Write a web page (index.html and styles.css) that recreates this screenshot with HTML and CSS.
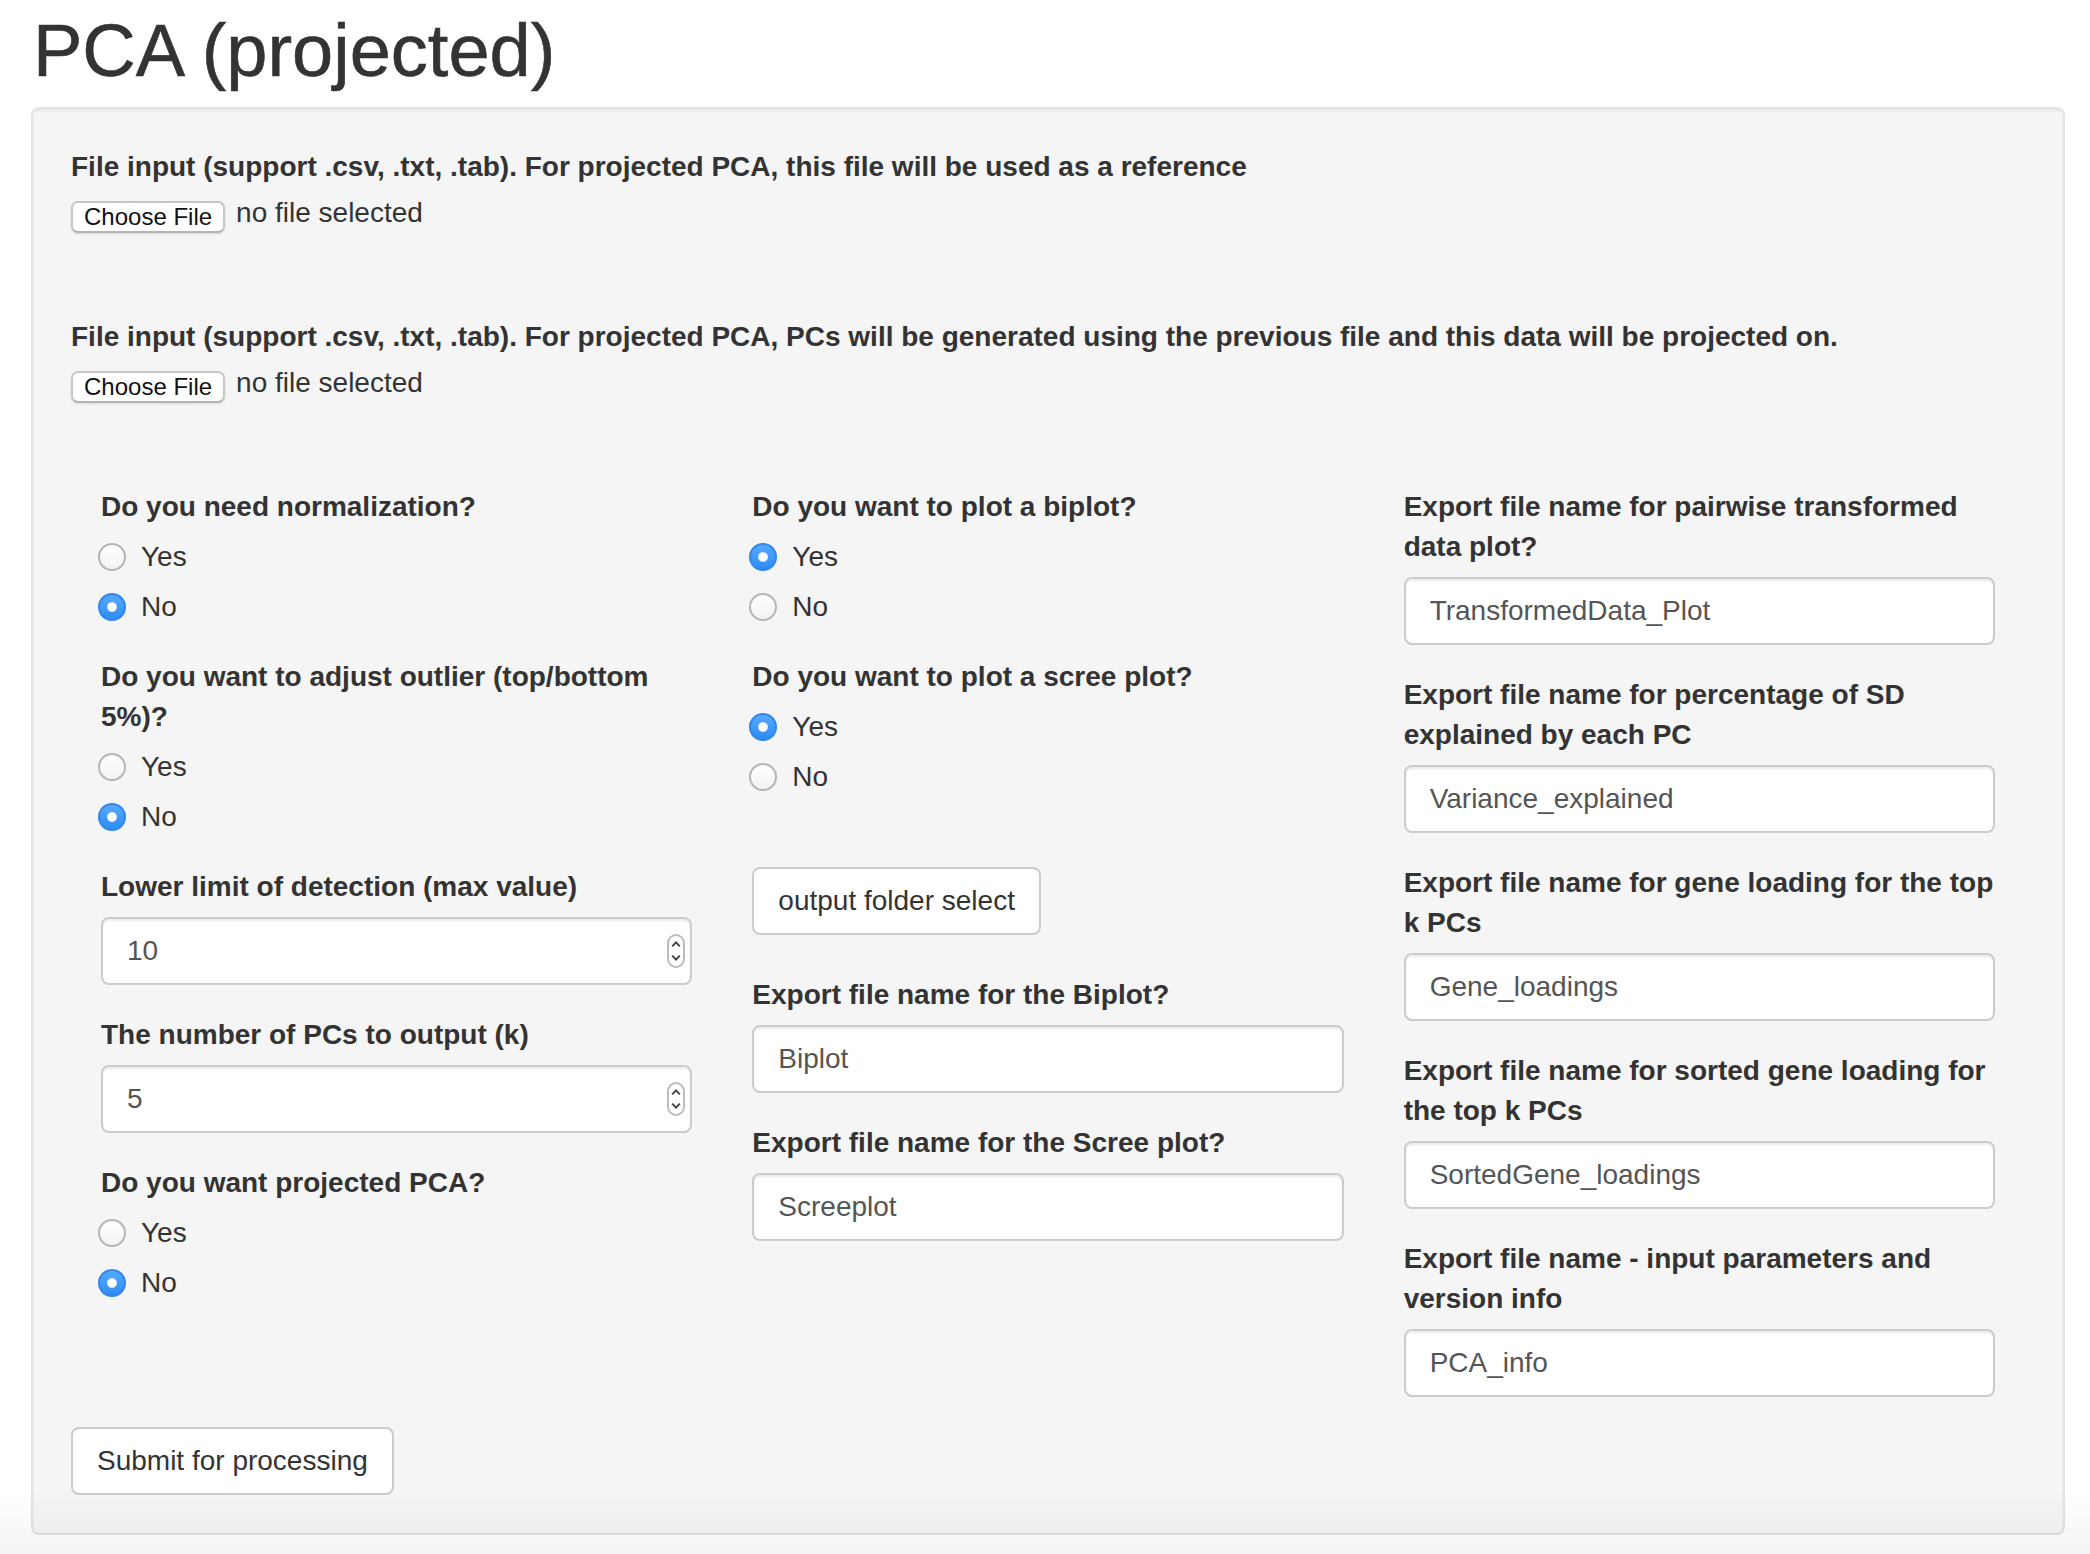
FILE: index.html
```html
<!DOCTYPE html>
<html lang="en">
<head>
<meta charset="utf-8">
<title>PCA (projected)</title>
<link rel="stylesheet" href="styles.css">
</head>
<body>
<div class="page">
  <h1 class="title">PCA (projected)</h1>
  <div class="well">
    <div class="file-group">
      <label class="control-label">File input (support .csv, .txt, .tab). For projected PCA, this file will be used as a reference</label>
      <div class="file-row"><span class="file-btn">Choose File</span><span class="file-name">no file selected</span></div>
    </div>
    <div class="file-group">
      <label class="control-label">File input (support .csv, .txt, .tab). For projected PCA, PCs will be generated using the previous file and this data will be projected on.</label>
      <div class="file-row"><span class="file-btn">Choose File</span><span class="file-name">no file selected</span></div>
    </div>

    <div class="cols">
      <div class="col">
        <div class="form-group">
          <label class="control-label">Do you need normalization?</label>
          <div class="radio"><span class="radio-dot"></span>Yes</div>
          <div class="radio"><span class="radio-dot checked"></span>No</div>
        </div>
        <div class="form-group">
          <label class="control-label">Do you want to adjust outlier (top/bottom 5%)?</label>
          <div class="radio"><span class="radio-dot"></span>Yes</div>
          <div class="radio"><span class="radio-dot checked"></span>No</div>
        </div>
        <div class="form-group">
          <label class="control-label">Lower limit of detection (max value)</label>
          <div class="form-control number"><span>10</span><svg class="spinner" viewBox="0 0 9 17" width="9" height="17"><rect x="0.5" y="0.5" width="8" height="16" rx="4" ry="4" fill="#fff" stroke="#bcbcbc"/><path d="M2.6 6.2 L4.5 4.2 L6.4 6.2" fill="none" stroke="#444" stroke-width="1"/><path d="M2.6 10.8 L4.5 12.8 L6.4 10.8" fill="none" stroke="#444" stroke-width="1"/></svg></div>
        </div>
        <div class="form-group">
          <label class="control-label">The number of PCs to output (k)</label>
          <div class="form-control number"><span>5</span><svg class="spinner" viewBox="0 0 9 17" width="9" height="17"><rect x="0.5" y="0.5" width="8" height="16" rx="4" ry="4" fill="#fff" stroke="#bcbcbc"/><path d="M2.6 6.2 L4.5 4.2 L6.4 6.2" fill="none" stroke="#444" stroke-width="1"/><path d="M2.6 10.8 L4.5 12.8 L6.4 10.8" fill="none" stroke="#444" stroke-width="1"/></svg></div>
        </div>
        <div class="form-group">
          <label class="control-label">Do you want projected PCA?</label>
          <div class="radio"><span class="radio-dot"></span>Yes</div>
          <div class="radio"><span class="radio-dot checked"></span>No</div>
        </div>
      </div>

      <div class="col">
        <div class="form-group">
          <label class="control-label">Do you want to plot a biplot?</label>
          <div class="radio"><span class="radio-dot checked"></span>Yes</div>
          <div class="radio"><span class="radio-dot"></span>No</div>
        </div>
        <div class="form-group">
          <label class="control-label">Do you want to plot a scree plot?</label>
          <div class="radio"><span class="radio-dot checked"></span>Yes</div>
          <div class="radio"><span class="radio-dot"></span>No</div>
        </div>
        <div class="btn-wrap"><span class="btn">output folder select</span></div>
        <div class="form-group">
          <label class="control-label">Export file name for the Biplot?</label>
          <div class="form-control">Biplot</div>
        </div>
        <div class="form-group">
          <label class="control-label">Export file name for the Scree plot?</label>
          <div class="form-control">Screeplot</div>
        </div>
      </div>

      <div class="col">
        <div class="form-group">
          <label class="control-label">Export file name for pairwise transformed data plot?</label>
          <div class="form-control">TransformedData_Plot</div>
        </div>
        <div class="form-group">
          <label class="control-label">Export file name for percentage of SD explained by each PC</label>
          <div class="form-control">Variance_explained</div>
        </div>
        <div class="form-group">
          <label class="control-label">Export file name for gene loading for the top k PCs</label>
          <div class="form-control">Gene_loadings</div>
        </div>
        <div class="form-group">
          <label class="control-label">Export file name for sorted gene loading for the top k PCs</label>
          <div class="form-control">SortedGene_loadings</div>
        </div>
        <div class="form-group">
          <label class="control-label">Export file name - input parameters and version info</label>
          <div class="form-control">PCA_info</div>
        </div>
      </div>
    </div>

    <div class="actions"><span class="btn">Submit for processing</span></div>
  </div>
</div>
<div class="page-shade"></div>
</body>
</html>
```

FILE: styles.css
```css
html, body {
  margin: 0;
  padding: 0;
  background: #ffffff;
}

body {
  font-family: "Liberation Sans", Arial, Helvetica, sans-serif;
  color: #333333;
}

.page {
  zoom: 2;
  padding: 0 12.5px 0 15.5px;
  font-size: 14px;
  line-height: 20px;
}

.title {
  font-size: 37px;
  line-height: 39.6px;
  font-weight: 400;
  color: #333333;
  -webkit-text-stroke: 0.3px #333333;
  margin: 5.5px 0 8.5px 1px;
}

.well {
  background: #f5f5f5;
  border: 1px solid #e3e3e3;
  border-radius: 4px;
  box-shadow: inset 0 1px 1px rgba(0, 0, 0, 0.05);
  padding: 19px;
}

.control-label {
  display: block;
  font-weight: 700;
  margin-bottom: 5px;
  color: #333333;
}

.file-group {
  margin-bottom: 40px;
}

.file-row {
  display: flex;
  align-items: flex-start;
  height: 20px;
}

.file-btn {
  margin-top: 2px;
  height: 14px;
  line-height: 14px;
  font-size: 12px;
  padding: 0 5.5px;
  border: 1px solid #c6c6c6;
  border-bottom-color: #b5b5b5;
  border-radius: 3.5px;
  background: #ffffff;
  box-shadow: 0 0.5px 1px rgba(0, 0, 0, 0.12);
  color: #111111;
}

.file-name {
  margin-left: 5.5px;
  font-size: 14px;
  line-height: 16px;
  color: #333333;
}

.cols {
  display: grid;
  grid-template-columns: repeat(3, 1fr);
}

.col {
  padding: 0 15px;
  display: flex;
  flex-direction: column;
  min-width: 0;
}

.form-group {
  margin-bottom: 15px;
}

.radio {
  display: flex;
  align-items: center;
  height: 20px;
}

.radio + .radio {
  margin-top: 5px;
}

.radio-dot {
  flex: none;
  box-sizing: border-box;
  width: 14px;
  height: 14px;
  border-radius: 50%;
  border: 1px solid #b5b5b5;
  background: linear-gradient(#ffffff, #f2f2f2);
  margin: 0 7.5px 0 -1.5px;
}

.radio-dot.checked {
  border-color: #2f87ef;
  background:
    radial-gradient(circle, #ffffff 2.1px, rgba(255, 255, 255, 0) 2.7px),
    linear-gradient(#56a9fd, #2f8cf5);
}

.form-control {
  box-sizing: border-box;
  height: 34px;
  padding: 6px 12px;
  font-size: 14px;
  line-height: 20px;
  color: #555555;
  background: #ffffff;
  border: 1px solid #cccccc;
  border-radius: 4px;
  box-shadow: inset 0 1px 1px rgba(0, 0, 0, 0.075);
  white-space: nowrap;
  overflow: hidden;
}

.number {
  display: flex;
  align-items: center;
  justify-content: space-between;
  padding-right: 2.5px;
}

.spinner {
  display: block;
  flex: none;
}

.btn {
  display: inline-block;
  box-sizing: border-box;
  padding: 6px 12px;
  font-size: 14px;
  line-height: 20px;
  color: #333333;
  background: #ffffff;
  border: 1px solid #cccccc;
  border-radius: 4px;
  white-space: nowrap;
}

.btn-wrap {
  display: flex;
  margin: 20px 0;
}

.actions {
  display: flex;
}

.page-shade {
  position: fixed;
  left: 0;
  right: 0;
  bottom: 0;
  height: 64px;
  pointer-events: none;
  background: linear-gradient(rgba(0, 0, 0, 0), rgba(0, 0, 0, 0.045));
}
```
